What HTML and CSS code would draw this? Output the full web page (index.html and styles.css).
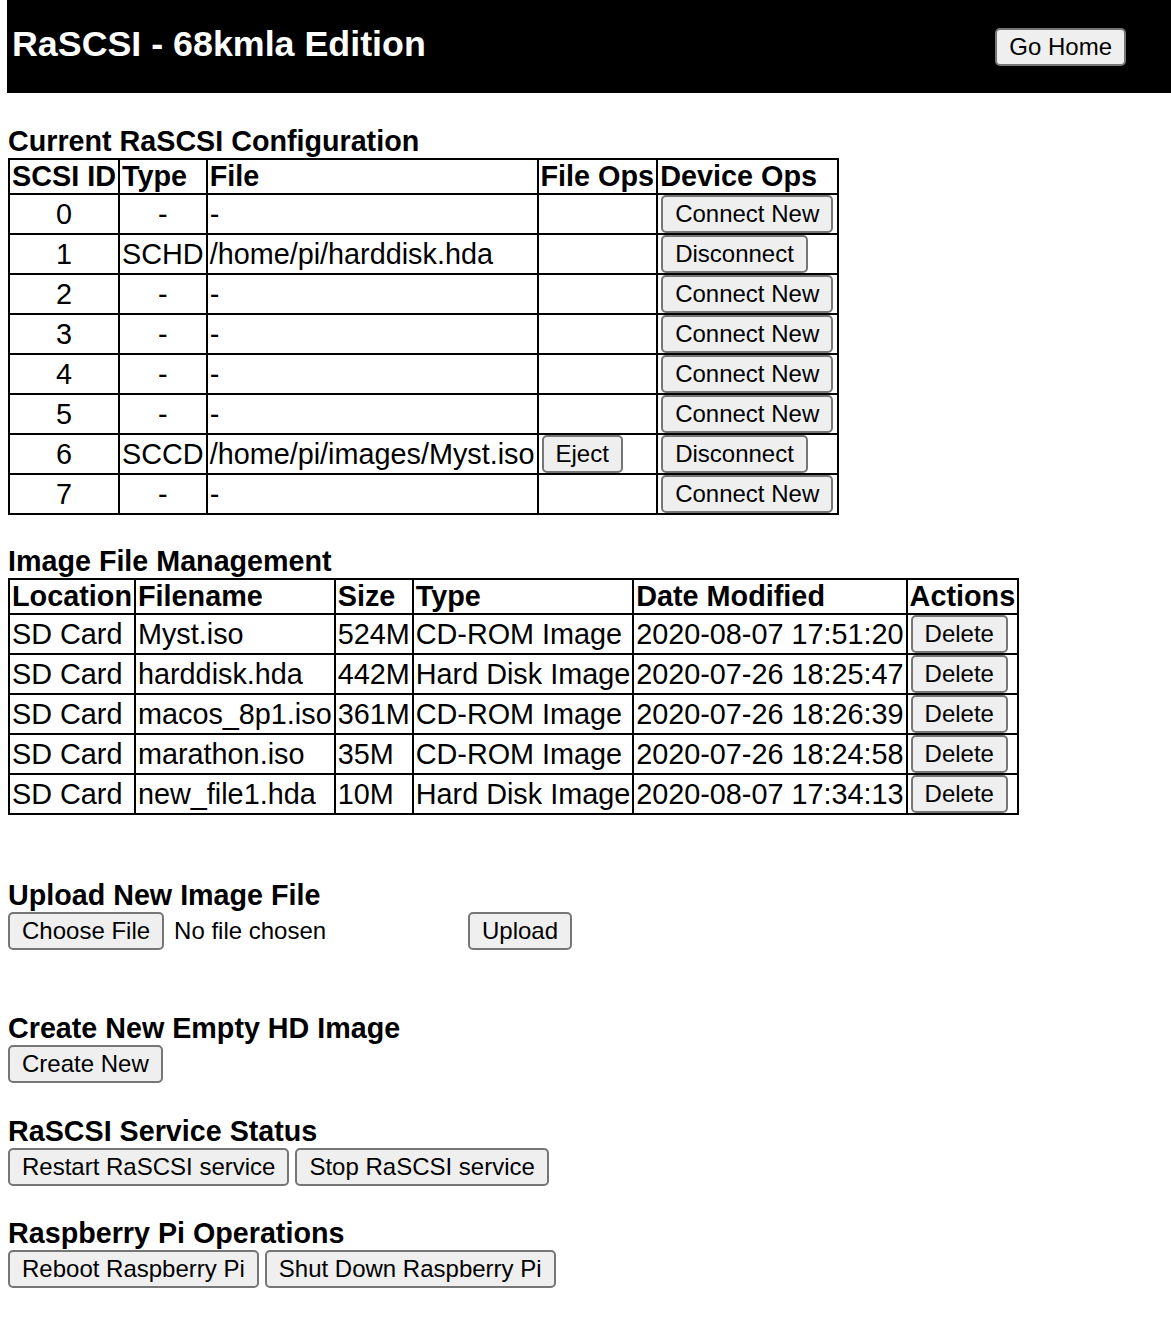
FILE: index.html
```html
<!DOCTYPE html>
<html>
<head>
<meta charset="utf-8">
<title>RaSCSI - 68kmla Edition</title>
<link rel="stylesheet" href="styles.css">
</head>
<body>
<header class="topbar">
  <h1 class="title">RaSCSI - 68kmla Edition</h1>
  <button class="btn home">Go Home</button>
</header>

<section class="sec sec-config">
  <h2 class="heading">Current RaSCSI Configuration</h2>
  <table class="grid">
    <tr><th>SCSI ID</th><th>Type</th><th>File</th><th>File Ops</th><th>Device Ops</th></tr>
    <tr><td class="c">0</td><td class="c">-</td><td>-</td><td></td><td><button class="btn">Connect New</button></td></tr>
    <tr><td class="c">1</td><td class="c">SCHD</td><td>/home/pi/harddisk.hda</td><td></td><td><button class="btn">Disconnect</button></td></tr>
    <tr><td class="c">2</td><td class="c">-</td><td>-</td><td></td><td><button class="btn">Connect New</button></td></tr>
    <tr><td class="c">3</td><td class="c">-</td><td>-</td><td></td><td><button class="btn">Connect New</button></td></tr>
    <tr><td class="c">4</td><td class="c">-</td><td>-</td><td></td><td><button class="btn">Connect New</button></td></tr>
    <tr><td class="c">5</td><td class="c">-</td><td>-</td><td></td><td><button class="btn">Connect New</button></td></tr>
    <tr><td class="c">6</td><td class="c">SCCD</td><td>/home/pi/images/Myst.iso</td><td><button class="btn">Eject</button></td><td><button class="btn">Disconnect</button></td></tr>
    <tr><td class="c">7</td><td class="c">-</td><td>-</td><td></td><td><button class="btn">Connect New</button></td></tr>
  </table>
</section>

<section class="sec sec-images">
  <h2 class="heading">Image File Management</h2>
  <table class="grid">
    <tr><th>Location</th><th>Filename</th><th>Size</th><th>Type</th><th>Date Modified</th><th>Actions</th></tr>
    <tr><td>SD Card</td><td>Myst.iso</td><td>524M</td><td>CD-ROM Image</td><td>2020-08-07 17:51:20</td><td><button class="btn">Delete</button></td></tr>
    <tr><td>SD Card</td><td>harddisk.hda</td><td>442M</td><td>Hard Disk Image</td><td>2020-07-26 18:25:47</td><td><button class="btn">Delete</button></td></tr>
    <tr><td>SD Card</td><td>macos_8p1.iso</td><td>361M</td><td>CD-ROM Image</td><td>2020-07-26 18:26:39</td><td><button class="btn">Delete</button></td></tr>
    <tr><td>SD Card</td><td>marathon.iso</td><td>35M</td><td>CD-ROM Image</td><td>2020-07-26 18:24:58</td><td><button class="btn">Delete</button></td></tr>
    <tr><td>SD Card</td><td>new_file1.hda</td><td>10M</td><td>Hard Disk Image</td><td>2020-08-07 17:34:13</td><td><button class="btn">Delete</button></td></tr>
  </table>
</section>

<section class="sec sec-upload">
  <h2 class="heading">Upload New Image File</h2>
  <div class="btn-row">
    <span class="file-input"><button class="btn">Choose File</button><span class="file-name">No file chosen</span></span>
    <button class="btn">Upload</button>
  </div>
</section>

<section class="sec sec-create">
  <h2 class="heading">Create New Empty HD Image</h2>
  <div class="btn-row">
    <button class="btn">Create New</button>
  </div>
</section>

<section class="sec sec-status">
  <h2 class="heading">RaSCSI Service Status</h2>
  <div class="btn-row">
    <button class="btn">Restart RaSCSI service</button>
    <button class="btn">Stop RaSCSI service</button>
  </div>
</section>

<section class="sec sec-pi">
  <h2 class="heading">Raspberry Pi Operations</h2>
  <div class="btn-row">
    <button class="btn">Reboot Raspberry Pi</button>
    <button class="btn">Shut Down Raspberry Pi</button>
  </div>
</section>
</body>
</html>
```

FILE: styles.css
```css
html {
  background: #fff;
  overflow: hidden;
}
body {
  margin: 0 0 0 7px;
  font-family: "Liberation Sans", Arial, sans-serif;
  font-size: 28.8px;
  color: #000;
}

.topbar {
  display: flex;
  justify-content: space-between;
  align-items: flex-start;
  background: #000;
  height: 93px;
}
.title {
  margin: 24px 0 0 5px;
  font-size: 35.8px;
  line-height: 40px;
  font-weight: bold;
  color: #fff;
}

.btn {
  font-family: "Liberation Sans", Arial, sans-serif;
  font-size: 24px;
  line-height: 28px;
  padding: 3px 12px;
  margin: 0;
  border: 2px solid #767676;
  border-radius: 5px;
  background: #efefef;
  color: #000;
}
.home {
  margin: 28px 45px 0 0;
}

.heading {
  margin: 0 0 0 1px;
  font-size: 28.7px;
  line-height: 33px;
  font-weight: bold;
}

.sec-config { margin-top: 32px; }
.sec-images { margin-top: 30px; }
.sec-upload { margin-top: 64px; }
.sec-create { margin-top: 62px; }
.sec-status { margin-top: 32px; }
.sec-pi { margin-top: 31px; }

.grid {
  border-collapse: collapse;
  margin-left: 1px;
}
.grid th,
.grid td {
  border: 2px solid #000;
  padding: 0 2px;
  line-height: 31px;
  text-align: left;
  vertical-align: middle;
  white-space: nowrap;
}
.grid th {
  padding-top: 1px;
  padding-bottom: 1px;
  font-weight: bold;
}
.grid td.c {
  text-align: center;
}
.grid td .btn {
  vertical-align: top;
  margin-left: 1px;
  margin-right: 2px;
}

.btn-row {
  display: flex;
  align-items: center;
  gap: 6px;
  margin-left: 1px;
}
.file-input {
  display: flex;
  align-items: center;
  width: 454px;
}
.file-name {
  margin-left: 10px;
  font-size: 24px;
}
```
